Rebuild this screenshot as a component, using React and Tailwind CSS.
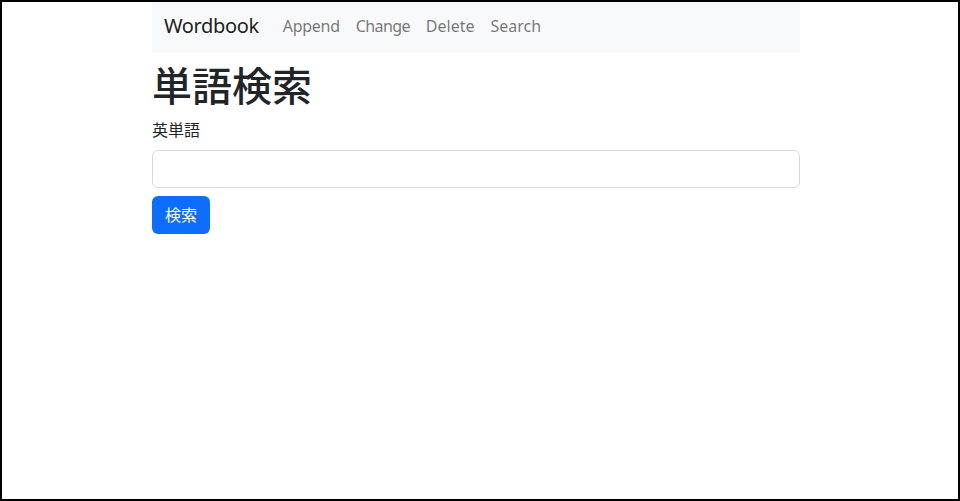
import React from "react";

export default function App() {
  const font = { fontFamily: '"Noto Sans", "Noto Sans CJK JP", sans-serif' };
  return (
    <div
      className="w-[960px] h-[501px] border-2 border-black bg-white text-[#212529] overflow-hidden"
      style={font}
    >
      <div className="ml-[150px] w-[648px]">
        <nav className="h-[51px] bg-[#f8f9fa] flex items-center px-3 pb-[4px]">
          <span className="text-[20px] leading-[30px] text-black/90 mr-4 tracking-[-0.35px]">Wordbook</span>
          <div className="flex items-center">
            <span className="px-2 text-[16px] leading-6 text-black/55 tracking-[-0.3px]">Append</span>
            <span className="px-2 text-[16px] leading-6 text-black/55 tracking-[-0.6px]">Change</span>
            <span className="px-2 text-[16px] leading-6 text-black/55">Delete</span>
            <span className="px-2 text-[16px] leading-6 text-black/55">Search</span>
          </div>
        </nav>
        <h1 className="mt-[9px] mb-2 text-[40px] leading-[48px] font-medium">単語検索</h1>
        <div className="mb-2 text-[16px] leading-6">英単語</div>
        <div className="h-[38px] border border-[#d6dadf] rounded-[6px] bg-white mb-2"></div>
        <button className="w-[58px] h-[38px] rounded-[6px] bg-[#0d6efd] text-white text-[16px] leading-6">
          検索
        </button>
      </div>
    </div>
  );
}
